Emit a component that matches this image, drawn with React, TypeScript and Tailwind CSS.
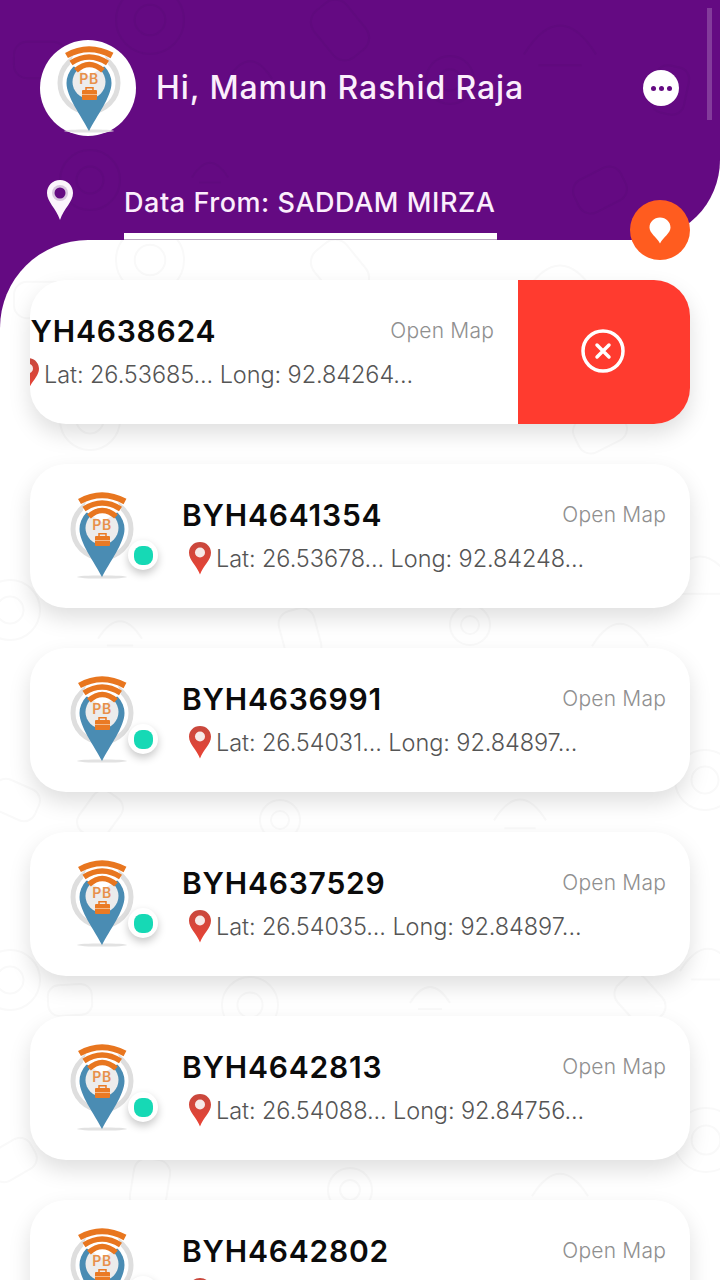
import { useId } from 'react';

const rows = [
  { id: 'BYH4638624', lat: '26.53685', long: '92.84264', swiped: true },
  { id: 'BYH4641354', lat: '26.53678', long: '92.84248' },
  { id: 'BYH4636991', lat: '26.54031', long: '92.84897' },
  { id: 'BYH4637529', lat: '26.54035', long: '92.84897' },
  { id: 'BYH4642813', lat: '26.54088', long: '92.84756' },
  { id: 'BYH4642802', lat: '26.54088', long: '92.84756' },
];

// faint chat-wallpaper style doodles behind the content
const doodles = [
  [40, 60, 26], [150, 20, 34], [250, 70, 22], [340, 30, 30], [450, 80, 24], [560, 40, 36], [670, 90, 24],
  [90, 180, 30], [210, 170, 18], [600, 190, 26], [10, 370, 30], [700, 330, 34], [15, 560, 24], [705, 540, 30],
  [120, 390, 22], [300, 395, 26], [470, 385, 20], [620, 395, 28], [100, 575, 24], [280, 580, 20], [520, 570, 26],
  [70, 760, 22], [250, 765, 28], [430, 755, 20], [640, 760, 26], [10, 740, 30], [708, 720, 28], [150, 945, 26],
  [350, 950, 22], [560, 945, 28], [12, 920, 24], [706, 900, 32], [708, 1130, 30], [10, 1120, 26],
];

function Doodles({ stroke, height }: { stroke: string; height: number }) {
  return (
    <svg className="absolute inset-0 pointer-events-none" width="720" height={height} fill="none" stroke={stroke} strokeWidth="2">
      {doodles.map(([x, y, r], i) =>
        i % 3 === 0 ? (
          <rect key={i} x={x - r} y={y - r * 0.7} width={r * 2} height={r * 1.4} rx={r * 0.5} transform={`rotate(${i * 17} ${x} ${y})`} />
        ) : i % 3 === 1 ? (
          <g key={i}>
            <circle cx={x} cy={y} r={r} />
            <circle cx={x} cy={y} r={r * 0.45} />
          </g>
        ) : (
          <path key={i} d={`M${x - r} ${y + r * 0.4}q${r} ${-r * 1.6} ${r * 2} 0M${x - r * 0.6} ${y + r * 0.7}h${r * 1.2}`} />
        ),
      )}
    </svg>
  );
}

function Logo() {
  return (
    <svg width="66" height="88" viewBox="0 0 66 88" fill="none" className="block">
      <ellipse cx="32" cy="85" rx="25" ry="1.6" fill="#e2e2e2" />
      <circle cx="32" cy="37" r="29" stroke="#dedede" strokeWidth="5" />
      <path d="M9.500 37a22.500 22.500 0 0 1 45 0c0 14-15 33-22.500 48C24.500 70 9.500 51 9.500 37z" fill="#4a8cb3" />
      <circle cx="32" cy="36" r="16.500" fill="#ececec" />
      <path d="M13 18l19 12 19-12-6-16H19z" fill="#ffffff" />
      <path d="M9.500 9.500Q32-3 55 9.500" stroke="#e8761f" strokeWidth="6" />
      <path d="M14 17Q32 5 50.500 17" stroke="#e8761f" strokeWidth="5.500" />
      <path d="M19 24.500Q32 12.500 46 24.500" stroke="#e8761f" strokeWidth="5.500" />
      <text x="32" y="38" textAnchor="middle" fontFamily="Inter, sans-serif" fontSize="14" fontWeight="600" letterSpacing="0.5" fill="#e8904a">
        PB
      </text>
      <rect x="25" y="44" width="15" height="10" rx="1" fill="#ea7a24" />
      <path d="M29 44v-2.200h7V44" stroke="#ea7a24" strokeWidth="1.500" />
      <path d="M25 48.500h15" stroke="#f6c9a3" strokeWidth="0.800" />
    </svg>
  );
}

function RedPin() {
  const id = useId();
  return (
    <svg width="24" height="34" viewBox="0 0 24 34" className="block shrink-0">
      <defs>
        <linearGradient id={id} x1="0" y1="0" x2="0" y2="1">
          <stop offset="0" stopColor="#c8483d" />
          <stop offset="1" stopColor="#ea4335" />
        </linearGradient>
      </defs>
      <path d="M12 1C5.500 1 1 5.800 1 11.800 1 19 8.500 24.500 12 33.500 15.500 24.500 23 19 23 11.800 23 5.800 18.500 1 12 1z" fill={`url(#${id})`} />
      <circle cx="12" cy="11.500" r="5" fill="#f7e9e7" />
    </svg>
  );
}

function RowText({ id, lat, long }: { id: string; lat: string; long: string }) {
  return (
    <div className="flex-1 min-w-0 pt-[32px]">
      <div className="flex items-center justify-between pr-[24px] h-[38px]">
        <span className="text-[30px] font-semibold tracking-[0.8px] text-[#0b0b0b]">{id}</span>
        <span className="text-[21px] font-light tracking-[0.2px] text-[#8f8f8f]">Open Map</span>
      </div>
      <div className="flex items-center gap-[4px] mt-[6px] pl-[6px] h-[36px]">
        <RedPin />
        <span className="pt-[2px] text-[23.500px] font-light tracking-[-0.08px] whitespace-nowrap text-[#555555]">
          Lat: {lat}... Long: {long}...
        </span>
      </div>
    </div>
  );
}

function RowCard({ id, lat, long, swiped }: { id: string; lat: string; long: string; swiped?: boolean }) {
  return (
    <div className="flex h-[144px] overflow-hidden rounded-[36px] bg-white shadow-[0_10px_22px_rgba(0,0,0,0.13)]">
      <div className={swiped ? 'flex w-[660px] shrink-0 -ml-[172px]' : 'flex w-[660px] shrink-0'}>
        <div className="relative w-[152px] shrink-0 pl-[40px] pt-[28px]">
          <Logo />
          <div className="absolute left-[98px] top-[76px] flex size-[30px] items-center justify-center rounded-full bg-white shadow-[0_4px_8px_rgba(0,0,0,0.22)]">
            <span className="size-[19px] rounded-[8px] bg-[#16d9b5]" />
          </div>
        </div>
        <RowText id={id} lat={lat} long={long} />
      </div>
      {swiped && (
        <div className="flex w-[172px] shrink-0 items-center justify-center bg-[#ff3b2f] pb-[2px] pr-[2px]">
          <svg width="44" height="44" viewBox="0 0 44 44" fill="none" stroke="#ffffff" strokeWidth="3.500" strokeLinecap="round">
            <circle cx="22" cy="22" r="20" />
            <path d="M16 16l12 12M28 16L16 28" />
          </svg>
        </div>
      )}
    </div>
  );
}

export default function App() {
  return (
    <div className="relative h-[1280px] w-[720px] overflow-hidden bg-white font-['Inter',sans-serif]">
      {/* Purple header */}
      <header className="relative h-[240px] overflow-hidden rounded-br-[80px] bg-[#640a82] px-[40px] pt-[40px]">
        <Doodles stroke="#600a7e" height={240} />
        <div className="relative flex items-center">
          <div className="flex size-[96px] items-center justify-center rounded-full bg-white pl-[3px] pt-[3px]">
            <Logo />
          </div>
          <h1 className="ml-[20px] text-[32px] font-medium tracking-[0.9px] text-[#fbeefc]">Hi, Mamun Rashid Raja</h1>
          <div className="ml-auto mr-[1px] flex size-[36px] items-center justify-center gap-[3px] rounded-full bg-white">
            <span className="size-[5px] rounded-full bg-[#640a82]" />
            <span className="size-[5px] rounded-full bg-[#640a82]" />
            <span className="size-[5px] rounded-full bg-[#640a82]" />
          </div>
        </div>
        <div className="relative mt-[26px] flex">
          <svg width="28" height="42" viewBox="0 0 28 42" className="ml-[6px] mt-[17px] shrink-0">
            <path d="M14 1C6.500 1 1 6.800 1 14c0 9 9 15 13 27 4-12 13-18 13-27C27 6.800 21.500 1 14 1z" fill="#fbf5fc" />
            <circle cx="14" cy="14" r="8" fill="#d9c7df" />
            <circle cx="14" cy="14" r="5.500" fill="#640a82" />
          </svg>
          <div className="ml-[50px] flex w-[373px] flex-col">
            <div className="flex h-[77px] items-center border-b-[6px] border-white pt-[12px]">
              <span className="whitespace-nowrap text-[27px] font-medium tracking-[0.55px] text-[#fbeefc]">Data From: SADDAM MIRZA</span>
            </div>
            <div className="h-px bg-[#b9a8c0]" />
          </div>
        </div>
        <div className="absolute right-[8px] top-[8px] h-[112px] w-[5px] bg-white/20" />
      </header>

      {/* List panel, the purple shows behind its rounded corner */}
      <div className="relative bg-[linear-gradient(to_right,#640a82_90px,#ffffff_90px)]">
        <div className="absolute right-[30px] -top-[40px] z-10 flex size-[60px] items-center justify-center rounded-full bg-[#ff5c1f]">
          <svg width="22" height="27" viewBox="0 0 22 27">
            <path d="M11 .500C5 .500 .500 5 .500 10.500c0 6 7 9 10.500 16 3.500-7 10.500-10 10.500-16C21.500 5 17 .500 11 .500z" fill="#ffffff" />
          </svg>
        </div>
        <main className="relative h-[1040px] overflow-hidden rounded-tl-[88px] bg-white px-[30px] pt-[40px]">
          <Doodles stroke="#f9f9f9" height={1040} />
          <div className="relative flex flex-col gap-[40px]">
            {rows.map((row) => (
              <RowCard key={row.id} {...row} />
            ))}
          </div>
        </main>
      </div>
    </div>
  );
}
